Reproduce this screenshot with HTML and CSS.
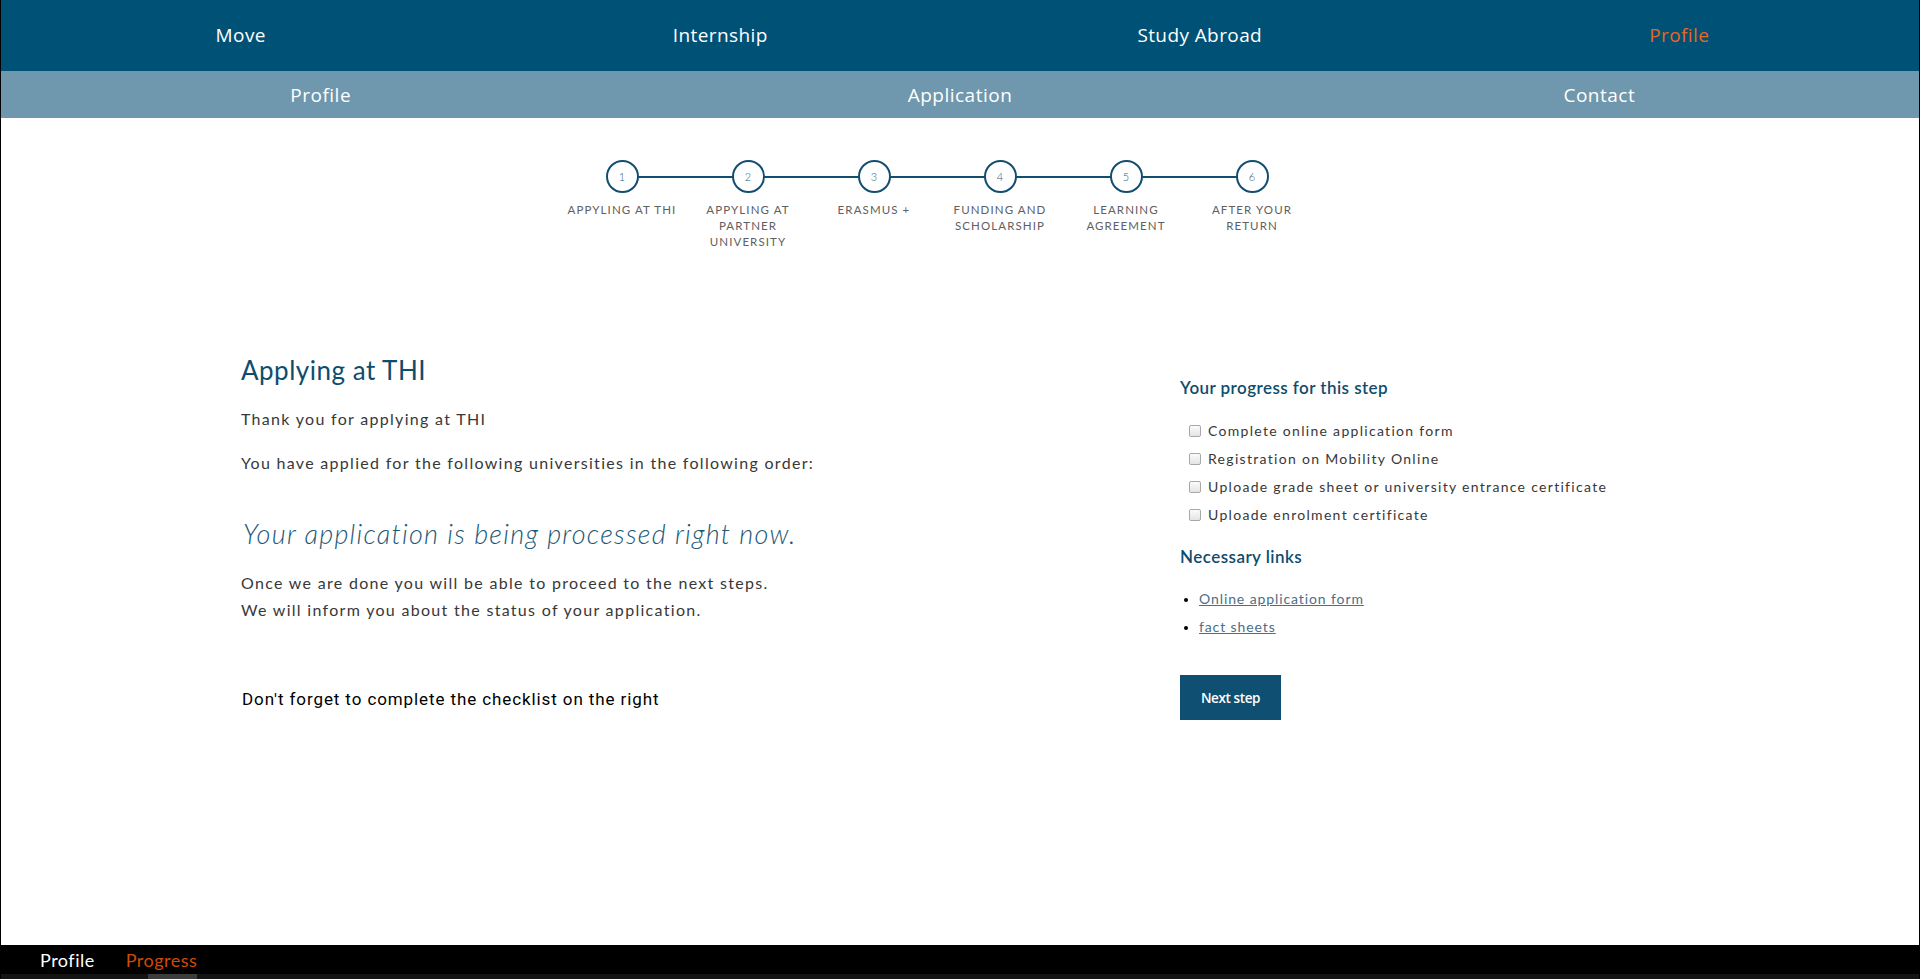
FILE: index.html
```html
<!DOCTYPE html>
<html lang="en">
<head>
<meta charset="utf-8">
<title>Applying at THI</title>
<link rel="stylesheet" href="styles.css">
</head>
<body>
<div class="page">
  <header>
    <nav class="mainnav">
      <a class="navitem">Move</a>
      <a class="navitem">Internship</a>
      <a class="navitem">Study Abroad</a>
      <a class="navitem active">Profile</a>
    </nav>
    <nav class="subnav">
      <a class="subitem">Profile</a>
      <a class="subitem">Application</a>
      <a class="subitem">Contact</a>
    </nav>
  </header>

  <main class="content">
    <ol class="stepper">
      <li class="step"><span class="circle">1</span><span class="label">Appyling at THI</span></li>
      <li class="step"><span class="circle">2</span><span class="label">Appyling at partner university</span></li>
      <li class="step"><span class="circle">3</span><span class="label">Erasmus +</span></li>
      <li class="step"><span class="circle">4</span><span class="label">Funding and scholarship</span></li>
      <li class="step"><span class="circle">5</span><span class="label">Learning agreement</span></li>
      <li class="step last"><span class="circle">6</span><span class="label">After your return</span></li>
    </ol>

    <div class="columns">
      <section class="leftcol">
        <h2 class="title">Applying at THI</h2>
        <p class="text p1">Thank you for applying at THI</p>
        <p class="text p2">You have applied for the following universities in the following order:</p>
        <p class="status">Your application is being processed right now.</p>
        <p class="text p3">Once we are done you will be able to proceed to the next steps.<br>We will inform you about the status of your application.</p>
        <p class="reminder">Don't forget to complete the checklist on the right</p>
      </section>
      <aside class="rightcol">
        <h3 class="subtitle first">Your progress for this step</h3>
        <ul class="checklist">
          <li><label><input type="checkbox"> Complete online application form</label></li>
          <li><label><input type="checkbox"> Registration on Mobility Online</label></li>
          <li><label><input type="checkbox"> Uploade grade sheet or university entrance certificate</label></li>
          <li><label><input type="checkbox"> Uploade enrolment certificate</label></li>
        </ul>
        <h3 class="subtitle">Necessary links</h3>
        <ul class="links">
          <li><a href="#">Online application form</a></li>
          <li><a href="#">fact sheets</a></li>
        </ul>
        <button class="nextbtn" type="button">Next step</button>
      </aside>
    </div>
  </main>

  <footer class="tabbar">
    <div class="tabs">
      <a class="tab">Profile</a>
      <a class="tab active">Progress</a>
    </div>
    <div class="scrolltrack"><span class="scrollthumb"></span></div>
  </footer>
</div>
</body>
</html>
```

FILE: styles.css
```css
* { box-sizing: border-box; }

html, body {
  margin: 0;
  padding: 0;
  height: 100%;
  background: #fff;
}

body {
  font-family: Lato, "Open Sans", sans-serif;
  color: #333;
}

.page {
  height: 100vh;
  display: flex;
  flex-direction: column;
  border-left: 1px solid #000;
  border-right: 1px solid #000;
  overflow: hidden;
}

/* ---------- top navigation ---------- */
.mainnav {
  display: grid;
  grid-template-columns: repeat(4, 1fr);
  height: 71px;
  background: #005176;
  align-items: center;
}

.navitem {
  text-align: center;
  color: #fff;
  font-family: "Open Sans", sans-serif;
  font-size: 19px;
  letter-spacing: 0.4px;
  padding-bottom: 2px;
}

.navitem.active { color: #e8661e; }

.subnav {
  display: grid;
  grid-template-columns: repeat(3, 1fr);
  height: 47px;
  background: #6f97ae;
  align-items: center;
}

.subitem {
  text-align: center;
  color: #fff;
  font-family: "Open Sans", sans-serif;
  font-size: 19px;
  letter-spacing: 0.5px;
}

/* ---------- content ---------- */
.content {
  flex: 1;
}

.stepper {
  list-style: none;
  margin: 0;
  padding: 42px 46px 0 0;
  display: flex;
  justify-content: center;
}

.step {
  position: relative;
  width: 126px;
  display: flex;
  flex-direction: column;
  align-items: center;
}

.step::after {
  content: "";
  position: absolute;
  top: 15.5px;
  left: 50%;
  width: 126px;
  height: 2px;
  background: #124e70;
}

.step.last::after { display: none; }

.circle {
  position: relative;
  z-index: 1;
  width: 33px;
  height: 33px;
  border: 2px solid #124e70;
  border-radius: 50%;
  background: #fff;
  display: flex;
  align-items: center;
  justify-content: center;
  font-size: 11px;
  font-weight: 300;
  color: #2c5a76;
}

.label {
  margin-top: 9px;
  width: 122px;
  height: 48px;
  text-align: center;
  text-transform: uppercase;
  font-size: 11.5px;
  font-weight: 400;
  line-height: 16px;
  letter-spacing: 1.1px;
  color: #606060;
}

.columns {
  display: grid;
  grid-template-columns: 939px 1fr;
  margin: 105px 0 0 240px;
}

.title {
  margin: 0;
  font-size: 26px;
  line-height: 30px;
  font-weight: 400;
  color: #0e4d6e;
  letter-spacing: 0.5px;
}

.text {
  margin: 0;
  font-size: 16px;
  line-height: 22px;
  letter-spacing: 1.3px;
  color: #383838;
}

.p1 { margin-top: 23px; }
.p2 { margin-top: 22px; }

.status {
  margin: 45px 0 0 2px;
  font-size: 27px;
  line-height: 30px;
  font-style: italic;
  font-weight: 300;
  letter-spacing: 1.25px;
  color: #1d5877;
}

.p3 {
  margin-top: 20px;
  line-height: 27px;
}

.reminder {
  margin: 65px 0 0 1px;
  font-family: Roboto, sans-serif;
  font-size: 17px;
  line-height: 22px;
  letter-spacing: 0.9px;
  color: #000;
}

.subtitle {
  margin: 17px 0 0;
  font-size: 17px;
  line-height: 22px;
  font-weight: 600;
  letter-spacing: 0.45px;
  color: #0e4d6e;
}

.subtitle.first { margin-top: 22px; }

.checklist {
  list-style: none;
  margin: 18px 0 0;
  padding: 0 0 0 9px;
}

.checklist li {
  height: 28px;
  line-height: 28px;
  font-size: 14px;
  letter-spacing: 1.3px;
  color: #383838;
}

.checklist label {
  display: flex;
  align-items: center;
}

.checklist input {
  appearance: none;
  -webkit-appearance: none;
  width: 12px;
  height: 12px;
  margin: 0 7px 0 0;
  border: 1px solid #a8a8a8;
  border-radius: 2px;
  background: linear-gradient(#fbfbfb, #e4e4e4);
}

.links {
  margin: 17px 0 0;
  padding: 0 0 0 19px;
}

.links li {
  height: 28px;
  line-height: 28px;
  font-size: 14px;
  letter-spacing: 0.9px;
}

.links li::marker { color: #000; font-size: 12px; }

.links a {
  color: #4b6f86;
  text-decoration: underline;
}

.nextbtn {
  margin-top: 34px;
  width: 101px;
  height: 45px;
  border: 0;
  background: #0f4f72;
  color: #fff;
  font-family: "Open Sans", sans-serif;
  font-size: 13.5px;
  font-weight: 600;
  letter-spacing: -0.4px;
  cursor: pointer;
}

/* ---------- bottom tab bar ---------- */
.tabbar {
  background: #000;
  height: 34px;
  display: flex;
  flex-direction: column;
}

.tabs {
  flex: 1;
  display: flex;
  align-items: center;
  gap: 31px;
  padding-left: 39px;
}

.tab {
  font-size: 18px;
  color: #fff;
  letter-spacing: 0.5px;
}

.tab.active { color: #d24a05; }

.scrolltrack {
  height: 5px;
  background: #141414;
  padding-left: 147px;
}

.scrollthumb {
  display: block;
  width: 49px;
  height: 5px;
  background: #3c3c3c;
}
```
